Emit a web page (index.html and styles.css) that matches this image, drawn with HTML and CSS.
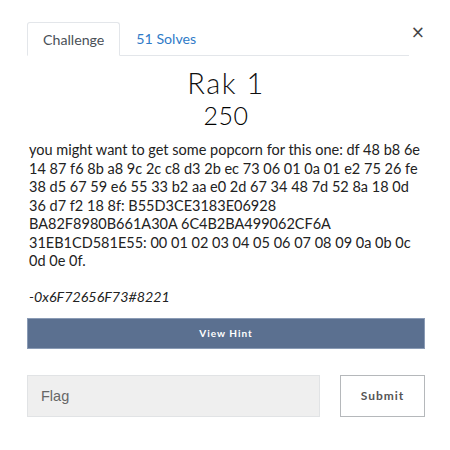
FILE: index.html
```html
<!DOCTYPE html>
<html>
<head>
<meta charset="utf-8">
<link rel="stylesheet" href="styles.css">
</head>
<body>
<div class="modal">
  <div class="top">
    <ul class="tabs">
      <li class="tab active">Challenge</li>
      <li class="tab link">51 Solves</li>
    </ul>
    <span class="close">×</span>
  </div>
  <h1 class="title">Rak 1</h1>
  <h2 class="value">250</h2>
  <p class="desc">you might want to get some popcorn for this one: df 48 b8 6e<br>14 87 f6 8b a8 9c 2c c8 d3 2b ec 73 06 01 0a 01 e2 75 26 fe<br>38 d5 67 59 e6 55 33 b2 aa e0 2d 67 34 48 7d 52 8a 18 0d<br>36 d7 f2 18 8f: B55D3CE3183E06928<br>BA82F8980B661A30A 6C4B2BA499062CF6A<br>31EB1CD581E55: 00 01 02 03 04 05 06 07 08 09 0a 0b 0c<br>0d 0e 0f.</p>
  <p class="author">-0x6F72656F73#8221</p>
  <button class="hint">View Hint</button>
  <div class="submit-row">
    <div class="flag">Flag</div>
    <button class="submit">Submit</button>
  </div>
</div>
</body>
</html>
```
FILE: styles.css
```css
html, body { margin: 0; padding: 0; background: #fff; }
body { font-family: Lato, "Liberation Sans", sans-serif; color: #212529; }
.modal { width: 398px; padding: 22px 0 0 27px; }
.top { display: flex; align-items: flex-start; }
.tabs { list-style: none; margin: 0; padding: 0; display: flex; width: 385px; border-bottom: 1px solid #e3e6ea; }
.tab { font-size: 14.2px; padding: 0 16px; height: 32px; line-height: 34px; }
.tab.active { border: 1px solid #e3e6ea; border-bottom: 1px solid #fff; margin-bottom: -1px; border-radius: 3px 3px 0 0; color: #495057; padding: 0 15px; }
.tab.link { color: #2f7bc8; }
.close { font-size: 17px; line-height: 18px; color: #444; margin-left: 2px; margin-top: 1px; font-family: "DejaVu Sans", sans-serif; }
.title { text-align: center; font-family: Lato, sans-serif; font-weight: 300; font-size: 29px; margin: 10px 0 0; line-height: 34px; letter-spacing: 1.5px; color: #111; }
.value { text-align: center; font-weight: 300; font-size: 25px; margin: 0; line-height: 30px; color: #000; letter-spacing: 0.5px; }
.desc { font-size: 14.5px; line-height: 18.5px; margin: 11px 0 0 2px; color: #222; white-space: nowrap; }
.author { font-style: italic; font-size: 14.3px; line-height: 19px; margin: 16px 0 0 2px; color: #222; }
.hint { display: block; width: 398px; height: 31px; margin-top: 12px; background: #5b7090; border: 1px solid #8a9bb5; color: #fff; font-family: Lato, sans-serif; font-weight: 700; font-size: 10px; letter-spacing: 1px; }
.submit-row { display: flex; justify-content: space-between; margin-top: 26px; }
.flag { width: 278px; height: 40px; background: #efefef; border: 1px solid #e1e3e5; padding-left: 13px; line-height: 40px; font-family: "Liberation Sans", Arial, sans-serif; font-size: 14.5px; color: #666; }
.submit { width: 85px; height: 42px; background: #fff; border: 1px solid #b5b8bb; font-family: Lato, sans-serif; font-weight: 700; font-size: 12px; letter-spacing: 1px; color: #555; }
```
